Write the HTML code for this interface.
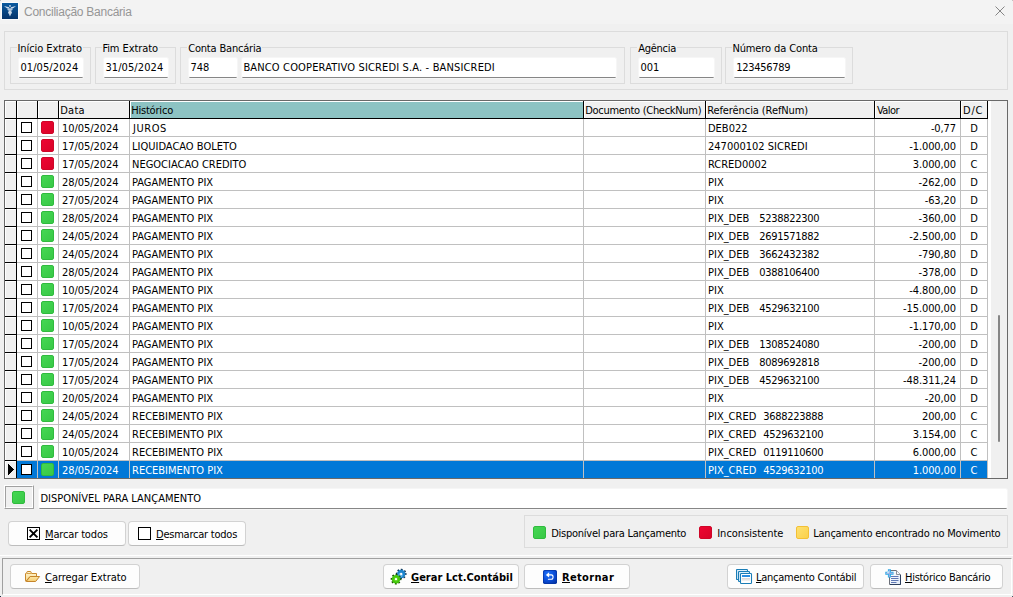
<!DOCTYPE html>
<html lang="pt-BR"><head><meta charset="utf-8"><title>Conciliação Bancária</title>
<style>
*{margin:0;padding:0;box-sizing:border-box}
html,body{width:1013px;height:597px;overflow:hidden;background:#f0f0f0}
body{position:relative;font-family:"DejaVu Sans Condensed","DejaVu Sans","Liberation Sans",sans-serif;font-size:11px;color:#000;font-stretch:condensed}
.abs{position:absolute}
#titlebar{position:absolute;left:0;top:0;width:1013px;height:24px;background:#f3f3f3}
#panel{position:absolute;left:4px;top:31px;width:1004px;height:59px;border:1px solid #dcdcdc}
.gb{position:absolute;top:47px;height:37px;border:1px solid #dcdcdc}
.ed{position:absolute;height:20px;background:#fff;border-bottom:1px solid #868686;border-radius:1.5px;box-shadow:0 0 0 1px rgba(255,255,255,.4)}
.t{position:absolute;white-space:nowrap}
#grid{position:absolute;left:4px;top:100px;width:1004px;height:379px;border:1px solid #696969;background:#fff;overflow:hidden}
.hd{position:absolute;top:0;height:18px;box-sizing:content-box;height:17px;border-right:1px solid #000;border-bottom:1px solid #000;background:#f0f0f0;box-shadow:inset 1px 1px 0 #fff;white-space:nowrap;overflow:hidden}
.hd.teal{background:#8dc3c3}
.row{position:absolute;left:0;width:983px;height:18px}
.row .c{position:absolute;top:0;height:18px;border-right:1px solid #c0c0c0;border-bottom:1px solid #c0c0c0;line-height:17px;padding-top:1px;white-space:nowrap;overflow:hidden}
.ind{position:absolute;left:0;top:0;width:12px;height:18px;background:#f0f0f0;border-right:1px solid #000;border-bottom:1px solid #000;box-shadow:inset 1px 1px 0 #fff}
.c1{left:12px;width:21px}
.c2{left:33px;width:21px}
.c3{left:54px;width:71px;padding-left:3px;letter-spacing:-0.06px}
.c4{left:125px;width:454px;padding-left:2px}
.c5{left:579px;width:122px}
.c6{left:701px;width:169px;padding-left:2px}
.c7{left:870px;width:86px;text-align:right;padding-right:4px;letter-spacing:-0.1px}
.c8{left:956px;width:27px;text-align:center}
.row.sel .c{background:#0078d7;color:#fff}
.chk{position:absolute;left:4px;top:3px;width:11px;height:11px;border:1px solid #000;background:#fff}
.sq{position:absolute;left:3px;top:2px;width:13px;height:13px;border-radius:2px}
.sq.r{background:linear-gradient(135deg,#ee0532,#d80428);border:1px solid #cf0628}
.sq.g{background:linear-gradient(135deg,#45d753,#38c846);border:1px solid #30bb3e}
.sq.y{background:linear-gradient(135deg,#fde170,#fbd04a);border:1px solid #f3c035}
.tri{position:absolute;left:3px;top:3px}
.n1{margin-left:10px;letter-spacing:-0.29px}
.n2{margin-left:7px;letter-spacing:-0.29px}
#sb{position:absolute;left:986px;top:0;width:16px;height:377px;background:#f0f0f0}
#thumb{position:absolute;left:7px;top:214px;width:2px;height:127px;background:#868686;border-radius:1px}
.btn{position:absolute;height:25px;border:1px solid #d2d2d2;border-bottom-color:#bdbdbd;border-radius:4px;background:#fdfdfd;white-space:nowrap;line-height:23px}
.btn u{text-decoration:underline;text-underline-offset:1px}
.btn.b{font-weight:bold}

</style></head><body>
<div id="titlebar">
<svg class="abs" style="left:1px;top:2px" width="18" height="18" viewBox="-1 -1 18 18"><defs><linearGradient id="ig" x1="0" y1="0" x2="0" y2="1"><stop offset="0" stop-color="#0b5a9f"/><stop offset="1" stop-color="#06346a"/></linearGradient></defs><rect x="-1" y="-1" width="18" height="18" fill="#fbfbfb"/><rect width="16" height="16" fill="url(#ig)"/><g fill="#dfe9f5" opacity=".92"><path d="M2 3 L7.2 4.3 L7.2 5.6 L5.2 5.4 Z"/><path d="M14 3 L8.8 4.3 L8.8 5.6 L10.8 5.4 Z"/><circle cx="8" cy="2.9" r="0.9"/><ellipse cx="8" cy="6.6" rx="2.7" ry="1.3" opacity=".85"/><ellipse cx="8" cy="9.4" rx="1.9" ry="1.7"/><path d="M6.7 10.6 L9.3 10.6 L8 13.4 Z"/></g></svg>
<span id="title" class="t" style="left:24px;letter-spacing:-0.253px;top:4px;line-height:16px;font-family:&quot;Liberation Sans&quot;,sans-serif;font-size:12px;font-stretch:normal;color:#969696">Conciliação Bancária</span>
<svg class="abs" style="left:994px;top:5px" width="13" height="13" viewBox="0 0 13 13"><path d="M1.5 1.5 L10.5 10.5 M10.5 1.5 L1.5 10.5" stroke="#858585" stroke-width="1" fill="none"/></svg>
</div>
<div id="panel"></div>
<div class="gb" style="left:10px;width:81px"></div><div class="abs" style="left:17px;top:47px;width:66px;height:1px;background:#f0f0f0"></div><span id="lbl1" class="t" style="left:17.4px;letter-spacing:-0.062px;top:42px;line-height:13px">Início Extrato</span>
<div class="ed" style="left:19px;top:58px;width:64px"></div><span id="ed1" class="t" style="left:20.4px;letter-spacing:0.089px;top:59px;line-height:17px">01/05/2024</span>
<div class="gb" style="left:95px;width:81px"></div><div class="abs" style="left:102px;top:47px;width:57px;height:1px;background:#f0f0f0"></div><span id="lbl2" class="t" style="left:102.4px;letter-spacing:-0.08px;top:42px;line-height:13px">Fim Extrato</span>
<div class="ed" style="left:104px;top:58px;width:64px"></div><span id="ed2" class="t" style="left:105.4px;letter-spacing:0.089px;top:59px;line-height:17px">31/05/2024</span>
<div class="gb" style="left:180px;width:445px"></div><div class="abs" style="left:187px;top:47px;width:75px;height:1px;background:#f0f0f0"></div><span id="lbl3" class="t" style="left:188.2px;letter-spacing:-0.185px;top:42px;line-height:13px">Conta Bancária</span>
<div class="ed" style="left:189px;top:58px;width:48px"></div><span id="ed3" class="t" style="left:190.4px;top:59px;line-height:17px">748</span>
<div class="ed" style="left:242px;top:58px;width:374px"></div><span id="ed4" class="t" style="left:243.4px;letter-spacing:0.152px;top:59px;line-height:17px">BANCO COOPERATIVO SICREDI S.A. - BANSICREDI</span>
<div class="gb" style="left:630px;width:92px"></div><div class="abs" style="left:637px;top:47px;width:40px;height:1px;background:#f0f0f0"></div><span id="lbl4" class="t" style="left:638.2px;letter-spacing:-0.267px;top:42px;line-height:13px">Agência</span>
<div class="ed" style="left:639px;top:58px;width:75px"></div><span id="ed5" class="t" style="left:640.4px;top:59px;line-height:17px">001</span>
<div class="gb" style="left:725px;width:128px"></div><div class="abs" style="left:732px;top:47px;width:86px;height:1px;background:#f0f0f0"></div><span id="lbl5" class="t" style="left:732.4px;letter-spacing:-0.114px;top:42px;line-height:13px">Número da Conta</span>
<div class="ed" style="left:734px;top:58px;width:111px"></div><span id="ed6" class="t" style="left:736.2px;letter-spacing:-0.3px;top:59px;line-height:17px">123456789</span>
<div id="grid">
<div class="hd" style="left:0px;width:11px"></div><div class="hd" style="left:12px;width:20px"></div><div class="hd" style="left:33px;width:20px"></div><div class="hd" style="left:54px;width:70px"><span id="h1" class="t" style="left:1.2px;letter-spacing:0.267px;top:3px;line-height:14px">Data</span></div><div class="hd teal" style="left:125px;width:453px"><span id="h2" class="t" style="left:1.2px;letter-spacing:-0.2px;top:3px;line-height:14px">Histórico</span></div><div class="hd" style="left:579px;width:121px"><span id="h3" class="t" style="left:1.2px;letter-spacing:-0.295px;top:3px;line-height:14px">Documento (CheckNum)</span></div><div class="hd" style="left:701px;width:168px"><span id="h4" class="t" style="left:1.2px;letter-spacing:-0.089px;top:3px;line-height:14px">Referência (RefNum)</span></div><div class="hd" style="left:870px;width:85px"><span id="h5" class="t" style="left:2px;letter-spacing:-0.6px;top:3px;line-height:14px">Valor</span></div><div class="hd" style="left:956px;width:26px"><span id="h6" class="t" style="left:2px;letter-spacing:0.8px;top:3px;line-height:14px">D/C</span></div>
<div class="row" style="top:18px"><div class="ind"></div><div class="c c1"><b class="chk"></b></div><div class="c c2"><b class="sq r"></b></div><div class="c c3">10/05/2024</div><div class="c c4" style="padding-left:3px;letter-spacing:.55px">JUROS</div><div class="c c5"></div><div class="c c6">DEB022</div><div class="c c7">-0,77</div><div class="c c8">D</div></div>
<div class="row" style="top:36px"><div class="ind"></div><div class="c c1"><b class="chk"></b></div><div class="c c2"><b class="sq r"></b></div><div class="c c3">17/05/2024</div><div class="c c4">LIQUIDACAO BOLETO</div><div class="c c5"></div><div class="c c6">247000102 SICREDI</div><div class="c c7">-1.000,00</div><div class="c c8">D</div></div>
<div class="row" style="top:54px"><div class="ind"></div><div class="c c1"><b class="chk"></b></div><div class="c c2"><b class="sq r"></b></div><div class="c c3">17/05/2024</div><div class="c c4">NEGOCIACAO CREDITO</div><div class="c c5"></div><div class="c c6">RCRED0002</div><div class="c c7">3.000,00</div><div class="c c8">C</div></div>
<div class="row" style="top:72px"><div class="ind"></div><div class="c c1"><b class="chk"></b></div><div class="c c2"><b class="sq g"></b></div><div class="c c3">28/05/2024</div><div class="c c4">PAGAMENTO PIX</div><div class="c c5"></div><div class="c c6">PIX</div><div class="c c7">-262,00</div><div class="c c8">D</div></div>
<div class="row" style="top:90px"><div class="ind"></div><div class="c c1"><b class="chk"></b></div><div class="c c2"><b class="sq g"></b></div><div class="c c3">27/05/2024</div><div class="c c4">PAGAMENTO PIX</div><div class="c c5"></div><div class="c c6">PIX</div><div class="c c7">-63,20</div><div class="c c8">D</div></div>
<div class="row" style="top:108px"><div class="ind"></div><div class="c c1"><b class="chk"></b></div><div class="c c2"><b class="sq g"></b></div><div class="c c3">28/05/2024</div><div class="c c4">PAGAMENTO PIX</div><div class="c c5"></div><div class="c c6">PIX_DEB<span class="n1">5238822300</span></div><div class="c c7">-360,00</div><div class="c c8">D</div></div>
<div class="row" style="top:126px"><div class="ind"></div><div class="c c1"><b class="chk"></b></div><div class="c c2"><b class="sq g"></b></div><div class="c c3">24/05/2024</div><div class="c c4">PAGAMENTO PIX</div><div class="c c5"></div><div class="c c6">PIX_DEB<span class="n1">2691571882</span></div><div class="c c7">-2.500,00</div><div class="c c8">D</div></div>
<div class="row" style="top:144px"><div class="ind"></div><div class="c c1"><b class="chk"></b></div><div class="c c2"><b class="sq g"></b></div><div class="c c3">24/05/2024</div><div class="c c4">PAGAMENTO PIX</div><div class="c c5"></div><div class="c c6">PIX_DEB<span class="n1">3662432382</span></div><div class="c c7">-790,80</div><div class="c c8">D</div></div>
<div class="row" style="top:162px"><div class="ind"></div><div class="c c1"><b class="chk"></b></div><div class="c c2"><b class="sq g"></b></div><div class="c c3">28/05/2024</div><div class="c c4">PAGAMENTO PIX</div><div class="c c5"></div><div class="c c6">PIX_DEB<span class="n1">0388106400</span></div><div class="c c7">-378,00</div><div class="c c8">D</div></div>
<div class="row" style="top:180px"><div class="ind"></div><div class="c c1"><b class="chk"></b></div><div class="c c2"><b class="sq g"></b></div><div class="c c3">10/05/2024</div><div class="c c4">PAGAMENTO PIX</div><div class="c c5"></div><div class="c c6">PIX</div><div class="c c7">-4.800,00</div><div class="c c8">D</div></div>
<div class="row" style="top:198px"><div class="ind"></div><div class="c c1"><b class="chk"></b></div><div class="c c2"><b class="sq g"></b></div><div class="c c3">17/05/2024</div><div class="c c4">PAGAMENTO PIX</div><div class="c c5"></div><div class="c c6">PIX_DEB<span class="n1">4529632100</span></div><div class="c c7">-15.000,00</div><div class="c c8">D</div></div>
<div class="row" style="top:216px"><div class="ind"></div><div class="c c1"><b class="chk"></b></div><div class="c c2"><b class="sq g"></b></div><div class="c c3">10/05/2024</div><div class="c c4">PAGAMENTO PIX</div><div class="c c5"></div><div class="c c6">PIX</div><div class="c c7">-1.170,00</div><div class="c c8">D</div></div>
<div class="row" style="top:234px"><div class="ind"></div><div class="c c1"><b class="chk"></b></div><div class="c c2"><b class="sq g"></b></div><div class="c c3">17/05/2024</div><div class="c c4">PAGAMENTO PIX</div><div class="c c5"></div><div class="c c6">PIX_DEB<span class="n1">1308524080</span></div><div class="c c7">-200,00</div><div class="c c8">D</div></div>
<div class="row" style="top:252px"><div class="ind"></div><div class="c c1"><b class="chk"></b></div><div class="c c2"><b class="sq g"></b></div><div class="c c3">17/05/2024</div><div class="c c4">PAGAMENTO PIX</div><div class="c c5"></div><div class="c c6">PIX_DEB<span class="n1">8089692818</span></div><div class="c c7">-200,00</div><div class="c c8">D</div></div>
<div class="row" style="top:270px"><div class="ind"></div><div class="c c1"><b class="chk"></b></div><div class="c c2"><b class="sq g"></b></div><div class="c c3">17/05/2024</div><div class="c c4">PAGAMENTO PIX</div><div class="c c5"></div><div class="c c6">PIX_DEB<span class="n1">4529632100</span></div><div class="c c7">-48.311,24</div><div class="c c8">D</div></div>
<div class="row" style="top:288px"><div class="ind"></div><div class="c c1"><b class="chk"></b></div><div class="c c2"><b class="sq g"></b></div><div class="c c3">20/05/2024</div><div class="c c4">PAGAMENTO PIX</div><div class="c c5"></div><div class="c c6">PIX</div><div class="c c7">-20,00</div><div class="c c8">D</div></div>
<div class="row" style="top:306px"><div class="ind"></div><div class="c c1"><b class="chk"></b></div><div class="c c2"><b class="sq g"></b></div><div class="c c3">24/05/2024</div><div class="c c4">RECEBIMENTO PIX</div><div class="c c5"></div><div class="c c6">PIX_CRED<span class="n2">3688223888</span></div><div class="c c7">200,00</div><div class="c c8">C</div></div>
<div class="row" style="top:324px"><div class="ind"></div><div class="c c1"><b class="chk"></b></div><div class="c c2"><b class="sq g"></b></div><div class="c c3">24/05/2024</div><div class="c c4">RECEBIMENTO PIX</div><div class="c c5"></div><div class="c c6">PIX_CRED<span class="n2">4529632100</span></div><div class="c c7">3.154,00</div><div class="c c8">C</div></div>
<div class="row" style="top:342px"><div class="ind"></div><div class="c c1"><b class="chk"></b></div><div class="c c2"><b class="sq g"></b></div><div class="c c3">10/05/2024</div><div class="c c4">RECEBIMENTO PIX</div><div class="c c5"></div><div class="c c6">PIX_CRED<span class="n2">0119110600</span></div><div class="c c7">6.000,00</div><div class="c c8">C</div></div>
<div class="row sel" style="top:360px"><div class="ind"><svg class="tri" width="6" height="11" viewBox="0 0 6 11" shape-rendering="crispEdges"><path d="M0 0h1v11h-1zM1 1h1v9h-1zM2 2h1v7h-1zM3 3h1v5h-1zM4 4h1v3h-1zM5 5h1v1h-1z" fill="#000"/></svg></div><div class="c c1"><b class="chk"></b></div><div class="c c2"><b class="sq g"></b></div><div class="c c3">28/05/2024</div><div class="c c4">RECEBIMENTO PIX</div><div class="c c5"></div><div class="c c6">PIX_CRED<span class="n2">4529632100</span></div><div class="c c7">1.000,00</div><div class="c c8">C</div></div>
<div id="sb"><div id="thumb"></div></div>
</div>
<div class="abs" style="left:4px;top:485px;width:30px;height:24px;border:1px solid;border-color:#fff #a0a0a0 #a0a0a0 #fff"><div class="abs" style="left:0;top:0;width:28px;height:22px;border:1px solid;border-color:#a0a0a0 #fff #fff #a0a0a0"></div><b class="sq g" style="left:7px;top:5px"></b></div>
<div class="ed" style="left:39px;top:489px;width:968px"></div><span id="status" class="t" style="left:40.4px;top:490px;line-height:17px">DISPONÍVEL PARA LANÇAMENTO</span>
<div class="btn" style="left:8px;top:521px;width:118px"><b class="chk" style="left:18px;top:5px;width:13px;height:13px"></b><svg class="abs" style="left:19px;top:6px" width="11" height="11" viewBox="0 0 11 11"><path d="M1.6 1.6 L9.4 9.4 M9.4 1.6 L1.6 9.4" stroke="#000" stroke-width="1.9" fill="none"/></svg><span id="b1" class="t" style="left:36px;letter-spacing:-0.145px;top:1px;line-height:23px"><u>M</u>arcar todos</span></div>
<div class="btn" style="left:128px;top:521px;width:118px"><b class="chk" style="left:9px;top:5px;width:13px;height:13px"></b><span id="b2" class="t" style="left:27px;letter-spacing:-0.229px;top:1px;line-height:23px"><u>D</u>esmarcar todos</span></div>
<div class="abs" style="left:524px;top:515px;width:484px;height:33px;border:1px solid #dcdcdc"></div>
<b class="sq g" style="left:533px;top:526px"></b><span id="lg1" class="t" style="left:551.2px;letter-spacing:-0.256px;top:526px;line-height:15px">Disponível para Lançamento</span>
<b class="sq r" style="left:699px;top:526px"></b><span id="lg2" class="t" style="left:717.2px;top:526px;line-height:15px">Inconsistente</span>
<b class="sq y" style="left:796px;top:526px"></b><span id="lg3" class="t" style="left:813.2px;letter-spacing:-0.218px;top:526px;line-height:15px">Lançamento encontrado no Movimento</span>
<div class="abs" style="left:0;top:555px;width:1013px;height:1px;background:#fff"></div>
<div class="abs" style="left:2px;top:558px;width:1010px;height:37px;border:1px solid;border-color:#a0a0a0 #fff #fff #a0a0a0"></div>
<div class="btn" style="left:10px;top:564px;width:130px"><svg class="abs" style="left:14px;top:6px" width="16" height="12" viewBox="0 0 16 12"><defs><linearGradient id="fg1" x1="0" y1="0" x2="0" y2="1"><stop offset="0" stop-color="#fff6d2"/><stop offset="1" stop-color="#f7d98c"/></linearGradient><linearGradient id="fg2" x1="0" y1="0" x2="0" y2="1"><stop offset="0" stop-color="#fbe6a6"/><stop offset="1" stop-color="#f5cd72"/></linearGradient></defs><path d="M0.5 9.8 V2.6 L1.4 2.3 L2.3 0.5 H5.7 L6.6 2.5 H11.5 V5.5 H5 L1 10.2 Z" fill="url(#fg1)" stroke="#c8882c" stroke-width="1" stroke-linejoin="round"/><path d="M1.6 2.5 H6.4" stroke="#d9a24a" stroke-width="1" fill="none"/><path d="M1.2 10.5 L5.2 5.5 H14.6 L10.6 10.5 Z" fill="url(#fg2)" stroke="#c5842a" stroke-width="1" stroke-linejoin="round"/></svg><span id="b3" class="t" style="left:34px;letter-spacing:-0.053px;top:1px;line-height:23px"><u>C</u>arregar Extrato</span></div>
<div class="btn b" style="left:383px;top:564px;width:136px"><svg class="abs" style="left:6px;top:3px" width="18" height="18" viewBox="0 0 18 18"><g transform="translate(11.2 6)"><circle r="4.6" fill="none" stroke="#0a3050" stroke-width="1.5" stroke-dasharray="1.806 1.806" transform="rotate(-11.25)"/><circle r="4.2" fill="#1c84cc"/><circle cx="-0.6" cy="1" r="2.2" fill="#8ad0fa" opacity=".6"/><circle r="1.15" fill="#fff"/></g><g transform="translate(6 11.2)"><circle r="4.6" fill="none" stroke="#1a5200" stroke-width="1.5" stroke-dasharray="1.806 1.806" transform="rotate(-11.25)"/><circle r="4.2" fill="#43c70a"/><circle cx="0" cy="0" r="2.2" fill="#6fe02e" opacity=".6"/><circle r="1.15" fill="#fff"/></g></svg><span id="b4" class="t" style="left:27px;top:1px;line-height:23px"><u>G</u>erar Lct.Contábil</span></div>
<div class="btn b" style="left:524px;top:564px;width:106px"><svg class="abs" style="left:18px;top:5px" width="14" height="14" viewBox="0 0 14 14"><defs><radialGradient id="rg" cx=".35" cy=".3" r=".8"><stop offset="0" stop-color="#1f72fa"/><stop offset=".6" stop-color="#0a4cd6"/><stop offset="1" stop-color="#0534a6"/></radialGradient></defs><rect x="0" y="0" width="14" height="14" rx="1.8" fill="url(#rg)"/><rect x=".5" y=".5" width="13" height="13" rx="1.5" fill="none" stroke="#0433a2" stroke-width="1" opacity=".7"/><path d="M6 4.9 H8.4 C10.6 4.9 10.6 9.3 8.4 9.3 H5.4" fill="none" stroke="#fff" stroke-width="1.1" stroke-linecap="round"/><path d="M2.9 4.9 L6.1 2.3 V7.5 Z" fill="#fff"/></svg><span id="b5" class="t" style="left:37px;letter-spacing:0.343px;top:1px;line-height:23px"><u>R</u>etornar</span></div>
<div class="btn" style="left:727px;top:564px;width:137px"><svg class="abs" style="left:8px;top:4px" width="17" height="16" viewBox="0 0 17 16"><defs><linearGradient id="wg" x1="0" y1="0" x2="0" y2="1"><stop offset="0" stop-color="#d4d4d4"/><stop offset="1" stop-color="#f4f4f4"/></linearGradient></defs><rect x="0.5" y="0.5" width="11" height="10" rx="0.8" fill="#dbeefb" stroke="#1a7db6" stroke-width="1.1"/><rect x="2.5" y="2.5" width="11" height="10" rx="0.8" fill="#dbeefb" stroke="#1a7db6" stroke-width="1.1"/><rect x="4.5" y="4.5" width="11" height="10" rx="0.8" fill="#fff" stroke="#1a7db6" stroke-width="1.1"/><rect x="6" y="6" width="8" height="2" fill="#2b8de0"/><rect x="6" y="9" width="8" height="3" fill="url(#wg)"/></svg><span id="b6" class="t" style="left:28px;letter-spacing:-0.267px;top:1px;line-height:23px"><u>L</u>ançamento Contábil</span></div>
<div class="btn" style="left:870px;top:564px;width:133px"><svg class="abs" style="left:13px;top:3px" width="18" height="18" viewBox="0 0 18 18"><defs><linearGradient id="dg" x1="0" y1="0" x2="1" y2="1"><stop offset="0" stop-color="#ffffff"/><stop offset="1" stop-color="#dfe9f7"/></linearGradient></defs><path d="M5.5 2.5 H12.5 L16.5 6.5 V16.5 H5.5 Z" fill="url(#dg)" stroke="#6b6f78" stroke-width="1"/><path d="M16.5 7 V16.5 H6" fill="none" stroke="#2d3f5e" stroke-width="1"/><path d="M12.5 2.5 V6.5 H16.5" fill="#f4f7fb" stroke="#8a8f99" stroke-width="1"/><g stroke="#5f78b4" stroke-width="1"><path d="M7 8.5 H14.5 M7 10.5 H14.5 M7 12.5 H14.5 M7 14.5 H12.5"/></g><path d="M5.4 1.2 V9.4 M1.3 5.3 H9.5" stroke="#17a8e6" stroke-width="3" stroke-linecap="butt" opacity=".95"/><path d="M5.4 2.2 V8.4 M2.3 5.3 H8.5" stroke="#93aee4" stroke-width="1.4" stroke-linecap="round"/><path d="M3 4.7 H4.8 V3" stroke="#e8f8ff" stroke-width=".9" fill="none" opacity=".9"/></svg><span id="b7" class="t" style="left:34px;letter-spacing:-0.282px;top:1px;line-height:23px"><u>H</u>istórico Bancário</span></div>
<div class="abs" style="left:0;top:0;width:1px;height:1px;background:#c2c2c2"></div><div class="abs" style="left:1012px;top:0;width:1px;height:1px;background:#c2c2c2"></div><div class="abs" style="left:0;top:596px;width:1px;height:1px;background:#1b2e46"></div><div class="abs" style="left:1012px;top:596px;width:1px;height:1px;background:#4a5866"></div>
</body></html>
